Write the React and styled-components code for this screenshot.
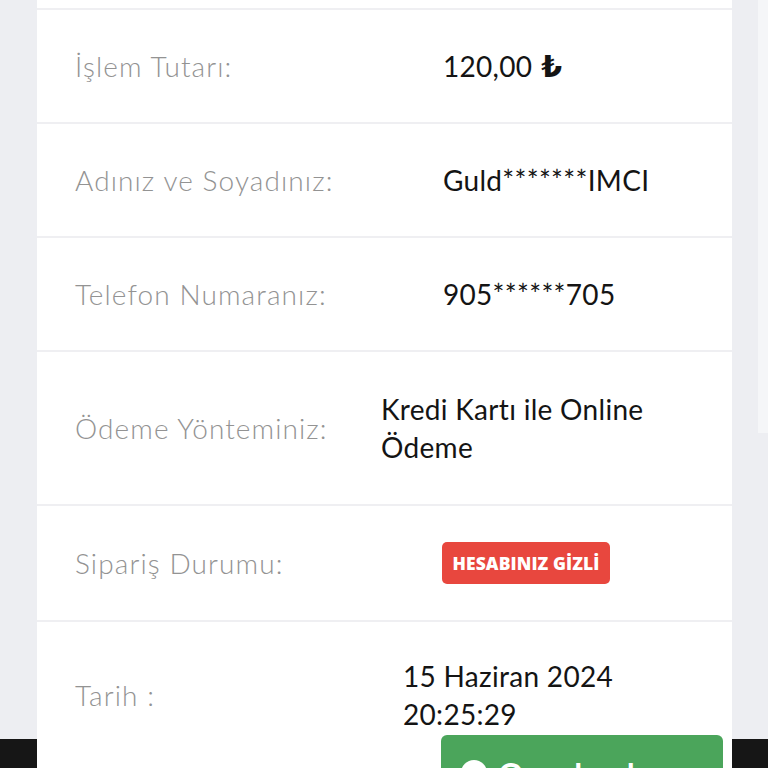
import React from "react";
import styled, { createGlobalStyle } from "styled-components";

const GlobalStyle = createGlobalStyle`
  html, body {
    margin: 0;
    padding: 0;
    height: 768px;
    overflow: hidden;
  }
  body {
    background: linear-gradient(to bottom, #edeef2 0, #edeef2 739px, #161616 739px, #161616 100%);
    font-family: "Lato", "DejaVu Sans", sans-serif;
  }
`;

const Page = styled.div`
  padding-left: 37px;
`;

const Card = styled.div`
  width: 695px;
  background: #ffffff;
  padding-top: 8px;
`;

const Row = styled.div`
  display: grid;
  grid-template-columns: ${(p) => p.$labelWidth}px 1fr;
  align-items: center;
  border-top: 2px solid #efeff2;
  padding: ${(p) => p.$pad}px 0 ${(p) => (p.$last ? 60 : p.$pad)}px;
`;

const Label = styled.div`
  padding-left: 38px;
  font-size: 28px;
  line-height: 38px;
  font-weight: 300;
  color: #939393;
  letter-spacing: 1.1px;
  white-space: nowrap;
`;

const Value = styled.div`
  font-size: 28px;
  line-height: 38px;
  font-weight: 400;
  color: #141414;
  letter-spacing: 0.3px;
  padding-right: 30px;
`;

const Lira = styled.span`
  font-family: "DejaVu Sans", sans-serif;
  font-weight: 700;
  font-size: 30px;
  line-height: 0;
  margin-left: 9px;
`;

const Badge = styled.div`
  display: flex;
  align-items: center;
  justify-content: center;
  height: 42px;
  width: 168px;
  border-radius: 5px;
  background: #e8473e;
  color: #ffffff;
  font-family: "Open Sans", "Lato", sans-serif;
  font-weight: 800;
  font-size: 17.5px;
  letter-spacing: 0.1px;
`;

const ScrollTrack = styled.div`
  position: fixed;
  top: 0;
  right: 0;
  width: 10px;
  height: 433px;
  background: #f5f6f8;
`;

const PayButton = styled.div`
  position: fixed;
  left: 441px;
  top: 735px;
  width: 282px;
  height: 80px;
  box-sizing: border-box;
  border-radius: 6px;
  background: #4ba55b;
  color: #ffffff;
  display: flex;
  align-items: flex-start;
  gap: 10px;
  padding: 24px 0 0 19px;
  font-family: "Lato", sans-serif;
  font-weight: 700;
  font-size: 32px;
  line-height: 32px;
`;

const rows = [
  { label: "İşlem Tutarı:", width: 406, pad: 37, value: <>120,00<Lira>₺</Lira></> },
  { label: "Adınız ve Soyadınız:", width: 406, pad: 37, value: "Guld*******IMCI" },
  { label: "Telefon Numaranız:", width: 406, pad: 37, value: "905******705" },
  { label: "Ödeme Yönteminiz:", width: 344, pad: 38, value: "Kredi Kartı ile Online Ödeme" },
  { label: "Sipariş Durumu:", width: 405, pad: 36, value: <Badge>HESABINIZ GİZLİ</Badge> },
  { label: "Tarih :", width: 366, pad: 35, value: <>15 Haziran 2024<br />20:25:29</>, last: true },
];

export default function App() {
  return (
    <>
      <GlobalStyle />
      <Page>
        <Card>
          {rows.map((r) => (
            <Row key={r.label} $labelWidth={r.width} $pad={r.pad} $last={r.last}>
              <Label>{r.label}</Label>
              <Value>{r.value}</Value>
            </Row>
          ))}
        </Card>
      </Page>
      <ScrollTrack />
      <PayButton>
        <svg width="28" height="28" viewBox="0 0 28 28">
          <circle cx="14" cy="14" r="13" fill="#ffffff" />
          <path d="M8 14.5l4 4 8-8" stroke="#4ba55b" strokeWidth="3" fill="none" strokeLinecap="round" strokeLinejoin="round" />
        </svg>
        <span>Onaylandı</span>
      </PayButton>
    </>
  );
}
